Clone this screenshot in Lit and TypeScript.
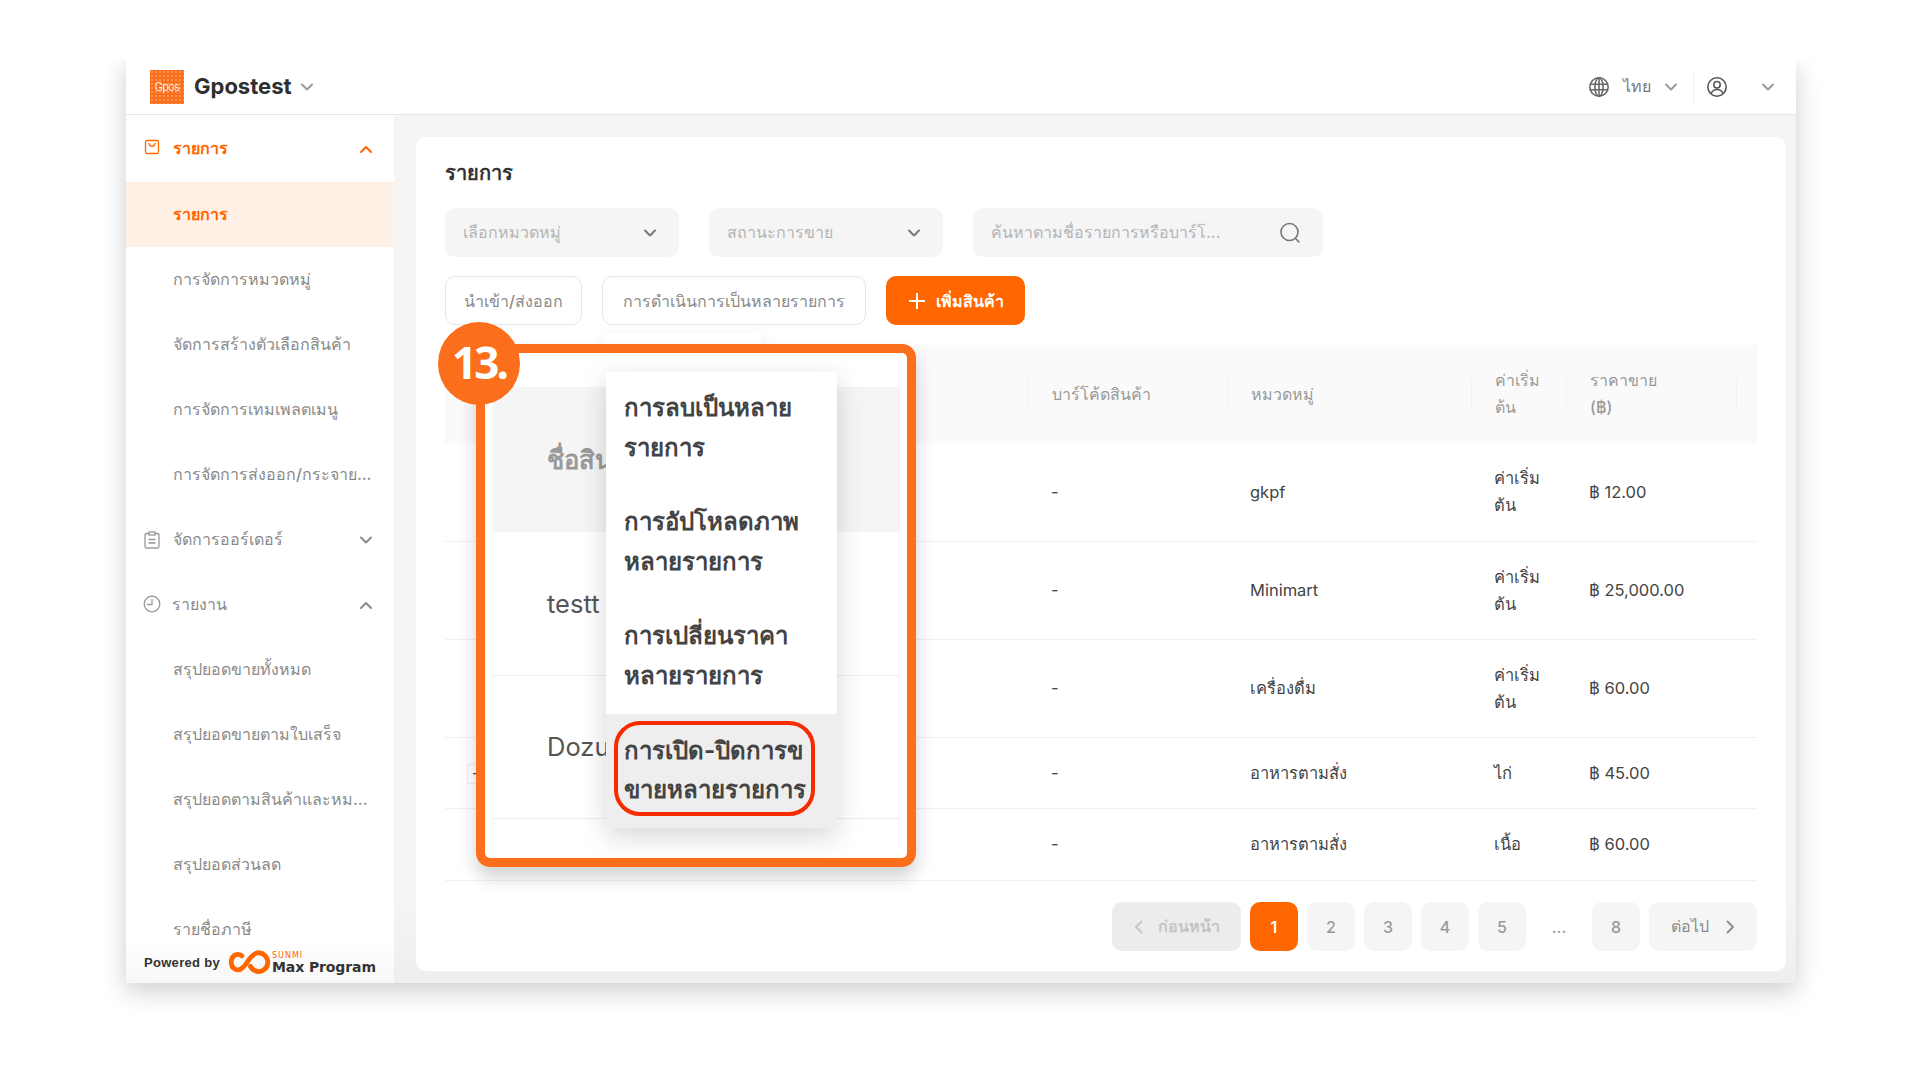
import { LitElement, html, css } from "lit";
import { customElement } from "lit/decorators.js";

const chev = (up = false) => html`<svg class="chev" viewBox="0 0 16 16" width="16" height="16"><path d=${up ? "M3 11 L8 6 L13 11" : "M3 5.5 L8 10.5 L13 5.5"} fill="none" stroke="currentColor" stroke-width="2" stroke-linecap="round" stroke-linejoin="round"/></svg>`;

const subA = ["รายการ", "การจัดการหมวดหมู่", "จัดการสร้างตัวเลือกสินค้า", "การจัดการเทมเพลตเมนู", "การจัดการส่งออก/กระจาย..."];
const subB = ["สรุปยอดขายทั้งหมด", "สรุปยอดขายตามใบเสร็จ", "สรุปยอดตามสินค้าและหม...", "สรุปยอดส่วนลด", "รายชื่อภาษี"];
const rows = [
  { h: 99, cat: "gkpf", base: ["ค่าเริ่ม", "ต้น"], price: "฿ 12.00" },
  { h: 98, cat: "Minimart", base: ["ค่าเริ่ม", "ต้น"], price: "฿ 25,000.00" },
  { h: 98, cat: "เครื่องดื่ม", base: ["ค่าเริ่ม", "ต้น"], price: "฿ 60.00" },
  { h: 71, cat: "อาหารตามสั่ง", base: ["ไก่"], price: "฿ 45.00", mark: true },
  { h: 72, cat: "อาหารตามสั่ง", base: ["เนื้อ"], price: "฿ 60.00" },
];
const menu = [
  ["การลบเป็นหลาย", "รายการ"],
  ["การอัปโหลดภาพ", "หลายรายการ"],
  ["การเปลี่ยนราคา", "หลายรายการ"],
  ["การเปิด-ปิดการข", "ขายหลายรายการ"],
];

@customElement("app-root")
export class AppRoot extends LitElement {
  static styles = css`
    :host { display: block; width: 1920px; height: 1080px; background: #fff; overflow: hidden; padding: 59px 0 0 126px; box-sizing: border-box; font-family: Inter, "Noto Sans", "Liberation Sans", sans-serif; color: #333; }
    * { box-sizing: border-box; }
    .window { width: 1670px; height: 924px; background: #fff; box-shadow: 0 8px 24px rgba(0,0,0,.2); clip-path: inset(0 -60px -60px -60px); display: flex; flex-direction: column; }
    .top { height: 56px; flex: none; border-bottom: 1px solid #e8e8e8; display: flex; align-items: center; padding: 0 20px 0 24px; color: #9a9a9a; }
    .logo { width: 34px; height: 34px; background: #fb6f1c radial-gradient(rgba(255,255,255,.25) 1px, transparent 1px) 0 0/4px 4px; color: #fff; font-size: 11px; letter-spacing: -.6px; display: flex; align-items: center; justify-content: center; font-weight: 300; }
    .brand { font-size: 22px; line-height: 26px; margin: -2px 7px 0 10px; font-weight: 700; color: #2f2f2f; width: 98px; }
    .spacer { flex: 1; }
    .lang { font-size: 16px; margin: 0 12px 0 13px; color: #777; }
    .sep { width: 1px; height: 30px; background: #eee; margin: 0 12px 0 14px; }
    .r-gap { width: 32px; }
    .body { flex: 1; min-height: 0; display: flex; }
    .side { width: 268px; flex: none; position: relative; overflow: hidden; font-size: 16px; font-weight: 500; color: #8a8a8a; }
    .item { height: 65px; display: flex; align-items: center; padding-left: 47px; white-space: nowrap; }
    .item.group { padding: 0 20px 0 18px; gap: 13px; }
    .item.group span { flex: 1; }
    .item.on { color: #ff6600; font-weight: 700; }
    .item.sel { background: #fff0e6; color: #ff6600; font-weight: 700; }
    .first { height: 67px; }
    .foot { position: absolute; left: 0; right: 0; bottom: 0; height: 42px; background: linear-gradient(rgba(255,255,255,.75), #f7f7f7); display: flex; align-items: center; padding: 0 0 0 18px; }
    .pow { font: 700 13px "Liberation Sans", sans-serif; color: #333; letter-spacing: .3px; width: 84px; }
    .max { display: flex; flex-direction: column; margin: 2px 0 0 1px; line-height: 1; font-family: "DejaVu Sans", sans-serif; }
    .max small { font-size: 8px; color: #ff6600; letter-spacing: 1px; }
    .max b { font-size: 14px; color: #333; letter-spacing: -.1px; }
    .main { flex: 1; background: linear-gradient(#f5f5f5 90%, #eee); padding: 22px 10px 12px 22px; min-width: 0; }
    .card { position: relative; height: 100%; background: #fff; border-radius: 10px; padding: 24px 29px 0; }
    h1 { font-size: 20px; line-height: 24px; font-weight: 700; margin: 0; color: #333; }
    .filters { display: flex; gap: 30px; margin-top: 23px; }
    .field { height: 49px; width: 234px; background: #f5f5f5; border-radius: 10px; display: flex; align-items: center; justify-content: space-between; padding: 0 21px 0 18px; color: #b4b4b4; font-size: 16px; font-weight: 500; }
    .field .chev { color: #777; }
    .field.search { width: 350px; }
    .actions { display: flex; gap: 20px; margin-top: 19px; }
    .btn { height: 49px; border: 1px solid #e5e5e5; border-radius: 10px; background: #fff; display: flex; align-items: center; justify-content: center; color: #8a8a8a; font-size: 16px; font-weight: 500; white-space: nowrap; padding-top: 1px; }
    .b1 { width: 137px; } .b2 { width: 264px; }
    .add { width: 139px; background: #ff6600; border: 0; color: #fff; font-weight: 700; gap: 10px; }
    .table { margin-top: 20px; font-size: 16.5px; color: #444; }
    .tr { display: grid; grid-template-columns: 583px 199px 244px 95px 170px 21px; align-items: center; border-bottom: 1px solid #f0f0f0; line-height: 27px; }
    .tr > div { padding-left: 23px; }
    .th { background: #fafafa; color: #999; font-size: 16px; font-weight: 500; height: 98px; border: 0; }
    .th > div { border-left: 1px solid #f2f2f2; height: 32px; display: flex; flex-direction: column; justify-content: center; }
    .th > div:first-child { border: 0; }
    .mark { display: inline-block; border: 1px solid #f0f0f0; height: 20px; line-height: 17px; padding: 0 4px; margin-left: -1px; }
    .pager { display: flex; justify-content: flex-end; gap: 9px; margin-top: 21px; }
    .pg { height: 49px; width: 48px; border-radius: 10px; background: #f5f5f5; color: #999; font-size: 16px; font-weight: 500; display: flex; align-items: center; justify-content: center; gap: 10px; }
    .pg.on { background: #ff6600; color: #fff; font-weight: 600; }
    .pg.dots { background: none; }
    .pg.prev { width: 129px; background: #ececec; color: #c4c4c4; gap: 14px; font-weight: 600; }
    .pg.next { width: 108px; gap: 16px; color: #8a8a8a; }
    .stub { position: absolute; left: 188px; top: 196px; width: 157px; height: 20px; background: #fff; box-shadow: 0 4px 16px rgba(0,0,0,.08); }
    .callout { position: absolute; left: 60px; top: 207px; width: 440px; height: 523px; background: #fff; box-shadow: 0 10px 18px rgba(0,0,0,.18); border-radius: 14px; }
    .frame { position: absolute; inset: 0; border: 9px solid #fb6f1c; border-radius: 14px; }
    .badge { position: absolute; left: -38px; top: -22px; width: 82px; height: 83px; padding-bottom: 4px; border-radius: 50%; background: #fb6f1c; color: #fff; display: flex; align-items: center; justify-content: center; font: 700 44px "Open Sans", sans-serif; letter-spacing: -3px; }
    .zoom { position: absolute; left: 17px; top: 43px; width: 407px; font-size: 25.5px; color: #555; }
    .zh { height: 145px; background: #f5f5f5; color: #999; font-weight: 700; display: flex; align-items: center; padding-left: 54px; }
    .zr { height: 143.5px; border-bottom: 1px solid #eee; display: flex; align-items: center; padding-left: 54px; }
    .drop { position: absolute; left: 130px; top: 28px; width: 231px; background: #fff; box-shadow: 0 8px 26px rgba(0,0,0,.16); font-size: 24px; font-weight: 700; color: #444; line-height: 40px; }
    .mi { position: relative; height: 114px; padding: 16px 0 0 18px; white-space: nowrap; overflow: hidden; }
    .mi span { display: block; }
    .mi.hot { background: #eee; padding-top: 18px; line-height: 38.500px; }
    .ring { position: absolute; left: 8px; top: 7px; width: 201px; height: 95px; border: 4px solid #f52c00; border-radius: 26px; }
  `;

  render() {
    return html`<div class="window">
      <div class="top">
        <div class="logo">Gpos</div><div class="brand">Gpostest</div>${chev()}
        <div class="spacer"></div>
        <svg viewBox="0 0 24 24" width="22" height="22" fill="none" stroke="#666" stroke-width="1.700"><circle cx="12" cy="12" r="10"/><ellipse cx="12" cy="12" rx="4.500" ry="10"/><path d="M2 9h20M2 15h20M12 2v20"/></svg>
        <span class="lang">ไทย</span>${chev()}
        <div class="sep"></div>
        <svg viewBox="0 0 24 24" width="22" height="22" fill="none" stroke="#555" stroke-width="1.700"><circle cx="12" cy="12" r="10"/><circle cx="12" cy="9.500" r="3.500"/><path d="M5.500 19c1.500-3 4-4.200 6.500-4.200s5 1.200 6.500 4.200"/></svg>
        <div class="r-gap"></div>${chev()}
      </div>
      <div class="body">
        <div class="side">
          <div class="item group on first">
            <svg viewBox="0 0 16 16" width="16" height="16" fill="none" stroke="#ff6600" stroke-width="1.300" style="margin-top:-3px"><rect x="1.500" y="1.500" width="13" height="13" rx="1.500"/><path d="M5 4.500c.5 2 1.600 2.800 3 2.800s2.500-.8 3-2.800" stroke-linecap="round"/></svg>
            <span>รายการ</span>${chev(true)}
          </div>
          ${subA.map((t, i) => html`<div class="item ${i === 0 ? "sel" : ""}">${t}</div>`)}
          <div class="item group">
            <svg viewBox="0 0 16 18" width="16" height="18" fill="none" stroke="#999" stroke-width="1.300"><rect x="1" y="2.500" width="14" height="14.500" rx="1.500"/><rect x="5" y="1" width="6" height="3" fill="#fff"/><path d="M4.500 8.500h7M4.500 12h7"/></svg>
            <span>จัดการออร์เดอร์</span>${chev()}
          </div>
          <div class="item group">
            <svg viewBox="0 0 18 18" width="18" height="18" fill="none" stroke="#999" stroke-width="1.300" style="margin:-2px -2px 0 -1px"><circle cx="9" cy="9" r="7.800"/><path d="M9 3.800V9.500H3.800"/></svg>
            <span>รายงาน</span>${chev(true)}
          </div>
          ${subB.map((t) => html`<div class="item">${t}</div>`)}
          <div class="foot">
            <span class="pow">Powered by</span>
            <svg viewBox="0 0 44 26" width="43" height="25" fill="none" stroke="#ff6600" stroke-width="5" stroke-linecap="round"><path d="M14 6C8 2 3 7 3 13c0 6 6 10 11 6 6-4 8-14 16-16 6-1 11 4 11 10s-6 11-12 9c-3-1-5-3-6-5"/></svg>
            <div class="max"><small>SUNMI</small><b>Max Program</b></div>
          </div>
        </div>
        <div class="main">
          <div class="card">
            <h1>รายการ</h1>
            <div class="filters">
              <div class="field"><span>เลือกหมวดหมู่</span>${chev()}</div>
              <div class="field"><span>สถานะการขาย</span>${chev()}</div>
              <div class="field search"><span>ค้นหาตามชื่อรายการหรือบาร์โ...</span>
                <svg viewBox="0 0 24 24" width="24" height="24" fill="none" stroke="#777" stroke-width="1.600"><circle cx="11.500" cy="11" r="8.500"/><path d="M17.500 17.500l3.500 3.500" stroke-linecap="round"/></svg>
              </div>
            </div>
            <div class="actions">
              <div class="btn b1">นำเข้า/ส่งออก</div>
              <div class="btn b2">การดำเนินการเป็นหลายรายการ</div>
              <div class="btn add"><svg viewBox="0 0 18 18" width="18" height="18" stroke="#fff" stroke-width="2"><path d="M9 1v16M1 9h16"/></svg>เพิ่มสินค้า</div>
            </div>
            <div class="table">
              <div class="tr th"><div></div><div>บาร์โค้ดสินค้า</div><div>หมวดหมู่</div><div><span>ค่าเริ่ม</span><span>ต้น</span></div><div><span>ราคาขาย</span><span>(฿)</span></div><div></div></div>
              ${rows.map((r) => html`<div class="tr" style="height:${r.h}px">
                <div>${r.mark ? html`<span class="mark">-</span>` : ""}</div>
                <div>-</div><div>${r.cat}</div>
                <div>${r.base.map((b) => html`<div>${b}</div>`)}</div>
                <div>${r.price}</div><div></div>
              </div>`)}
            </div>
            <div class="pager">
              <div class="pg prev"><svg viewBox="0 0 10 16" width="10" height="16" fill="none" stroke="currentColor" stroke-width="1.800"><path d="M8 2L2 8l6 6"/></svg><span>ก่อนหน้า</span></div>
              <div class="pg on">1</div><div class="pg">2</div><div class="pg">3</div><div class="pg">4</div><div class="pg">5</div>
              <div class="pg dots">...</div><div class="pg">8</div>
              <div class="pg next"><span>ต่อไป</span><svg viewBox="0 0 10 16" width="10" height="16" fill="none" stroke="currentColor" stroke-width="1.800"><path d="M2 2l6 6-6 6"/></svg></div>
            </div>
            <div class="stub"></div>
            <div class="callout">
              <div class="zoom">
                <div class="zh">ชื่อสิน</div>
                <div class="zr">testt</div>
                <div class="zr">Dozu</div>
              </div>
              <div class="frame"></div>
              <div class="drop">
                ${menu.map((m, i) => html`<div class="mi ${i === 3 ? "hot" : ""}"><span>${m[0]}</span><span>${m[1]}</span>${i === 3 ? html`<div class="ring"></div>` : ""}</div>`)}
              </div>
              <div class="badge">13.</div>
            </div>
          </div>
        </div>
      </div>
    </div>`;
  }
}
